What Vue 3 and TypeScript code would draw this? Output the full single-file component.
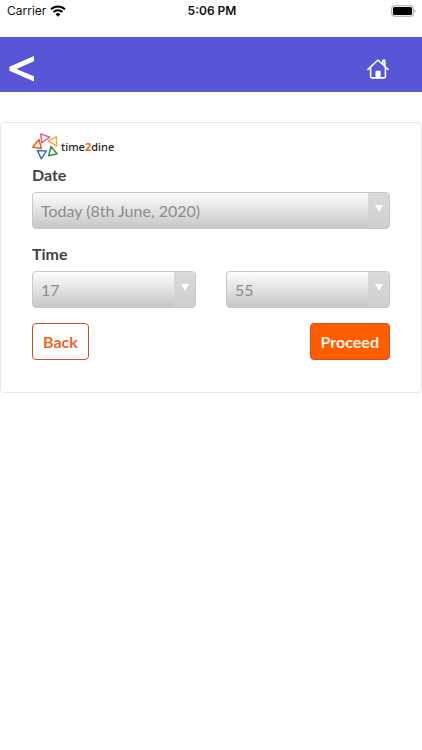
<script setup lang="ts">
import { ref } from 'vue'

const dates: string[] = ['Today (8th June, 2020)']
const hours: string[] = ['17', '18', '19', '20', '21']
const minutes: string[] = ['00', '15', '30', '45', '55']

const date = ref(dates[0])
const hour = ref('17')
const minute = ref('55')
</script>

<template>
  <div class="page">
    <div class="status">
      <div class="carrier">
        <span>Carrier</span>
        <svg class="wifi" width="16" height="12" viewBox="0 0 16 12" aria-hidden="true">
          <path d="M1 4.4a10 10 0 0 1 14 0" />
          <path d="M3.5 7a6.4 6.4 0 0 1 9 0" />
          <path class="dot" d="M5.6 9.2a3.4 3.4 0 0 1 4.8 0L8 11.7z" />
        </svg>
      </div>
      <time class="clock">5:06 PM</time>
      <svg class="battery" width="26" height="12" viewBox="0 0 26 12" aria-hidden="true">
        <rect x="0.7" y="0.7" width="21.6" height="10.6" rx="3" fill="#fff" stroke="#a9a9a9" stroke-width="1.1" />
        <rect x="2" y="2" width="19" height="8" rx="1.6" fill="#000" />
        <path d="M23.6 4.2c1.3.5 1.3 3.1 0 3.6z" fill="#999" />
      </svg>
    </div>

    <header class="bar">
      <button class="nav" type="button" aria-label="Go back">
        <svg width="26" height="26" viewBox="0 0 26 26" aria-hidden="true">
          <path d="M25 0v5.2L7.4 12.9 25 20.3v5.2L0.4 14.8v-4z" fill="#fff" />
        </svg>
      </button>
      <a class="nav" href="#" aria-label="Home">
        <svg width="22" height="20" viewBox="0 0 22 20" fill="none" stroke="#fff" stroke-width="1.6" stroke-linecap="round" stroke-linejoin="round" aria-hidden="true">
          <path d="M1 10.4L11 1l10 9.4" />
          <path d="M3.6 8.6v9q0 1.3 1.3 1.3h12.2q1.3 0 1.3-1.3v-9" />
          <path d="M15.9 5V1.2h1.9v5.5" />
          <path d="M8.9 18.4v-6.2h4.3v6.2z" fill="#fff" stroke-width="0.8" />
        </svg>
      </a>
    </header>

    <main class="card">
      <div class="logo">
        <svg width="26" height="27" viewBox="0 0 26 27" fill="none" stroke-width="1.5" stroke-linejoin="round" aria-hidden="true">
          <path d="M8.7 0.9L17.9 4.2l-8.2 5.4z" stroke="#ee5e8c" />
          <path d="M24.4 3.6l.2 9.2-8.3-4.6z" stroke="#f4a83a" />
          <path d="M7 6.6l2.4 8.9-8.6-1.4z" stroke="#ec5f28" />
          <path d="M18.9 13.6l6.2 7.2-8.4 2z" stroke="#3c8a3c" />
          <path d="M5.4 17.4l9 .5-5.2 7.9z" stroke="#2f72c4" />
        </svg>
        <span class="brand">time<b>2</b>dine</span>
      </div>

      <form class="form" @submit.prevent>
        <div class="field">
          <label for="date">Date</label>
          <div class="picker">
            <select id="date" v-model="date">
              <option v-for="d in dates" :key="d">{{ d }}</option>
            </select>
            <span class="arrow"></span>
          </div>
        </div>
        <div class="field">
          <label for="hour">Time</label>
          <div class="pair">
            <div class="picker">
              <select id="hour" v-model="hour">
                <option v-for="h in hours" :key="h">{{ h }}</option>
              </select>
              <span class="arrow"></span>
            </div>
            <div class="picker">
              <select id="minute" v-model="minute" aria-label="Minutes">
                <option v-for="m in minutes" :key="m">{{ m }}</option>
              </select>
              <span class="arrow"></span>
            </div>
          </div>
        </div>
        <div class="actions">
          <button class="btn" type="button">Back</button>
          <button class="btn primary" type="submit">Proceed</button>
        </div>
      </form>
    </main>
  </div>
</template>

<style>
body {
  background: #fff;
}
</style>

<style scoped>
.page {
  font-family: Lato, sans-serif;
  color: #444;
}
.status {
  display: grid;
  grid-template-columns: 1fr auto 1fr;
  align-items: center;
  padding: 3px 5px 18px 7px;
  font-family: Inter, sans-serif;
  font-size: 12px;
  line-height: 16px;
  color: #111;
}
.carrier {
  display: flex;
  align-items: center;
  gap: 4px;
}
.wifi {
  fill: none;
  stroke: #000;
  stroke-width: 2;
}
.wifi .dot {
  fill: #000;
  stroke: none;
}
.clock {
  font-weight: 600;
}
.battery {
  justify-self: end;
}
.bar {
  display: flex;
  justify-content: space-between;
  align-items: center;
  height: 55px;
  padding: 0 33px 0 9px;
  background: #5856d6;
}
.nav {
  display: flex;
  padding: 8px 0 0;
  border: 0;
  background: none;
}
.card {
  margin-top: 30px;
  padding: 10px 31px 32px;
  border: 1px solid #e6e6e6;
  border-radius: 4px;
}
.logo {
  display: flex;
  align-items: center;
  gap: 3px;
  height: 27px;
}
.brand {
  font-family: "Noto Sans", sans-serif;
  font-size: 11px;
  font-weight: 500;
  color: #222;
}
.brand b {
  color: #f26522;
}
.form {
  display: flex;
  flex-direction: column;
  gap: 10px;
}
.field label {
  display: block;
  padding: 4px 0 6px;
  font-size: 16px;
  line-height: 22px;
  font-weight: 700;
}
.pair {
  display: grid;
  grid-template-columns: 1fr 1fr;
  gap: 30px;
}
.picker {
  display: flex;
  height: 37px;
  box-sizing: border-box;
  border: 1px solid #c8c8c8;
  border-radius: 4px;
  overflow: hidden;
  background: linear-gradient(#fdfdfd, #c6c6c6);
}
select {
  appearance: none;
  flex: 1;
  min-width: 0;
  padding: 0 8px;
  border: 0;
  background: none;
  font-family: Lato, sans-serif;
  font-size: 16px;
  color: #8c8c8c;
}
.arrow {
  display: flex;
  justify-content: center;
  width: 21px;
  padding-top: 12px;
  background: linear-gradient(#dadada, #cecece);
}
.arrow::before {
  content: "";
  height: 0;
  border: 4px solid transparent;
  border-top: 7px solid #fff;
  border-bottom: 0;
}
.actions {
  display: flex;
  justify-content: space-between;
  padding-top: 5px;
}
.btn {
  height: 37px;
  padding: 0 10px;
  border: 1px solid #d2501c;
  border-radius: 4px;
  background: #fff;
  font-family: Lato, sans-serif;
  font-size: 16px;
  font-weight: 700;
  color: #f26522;
}
.btn.primary {
  background: #ff5e00;
  border-color: #d2501c;
  color: #fff3e6;
}
</style>
